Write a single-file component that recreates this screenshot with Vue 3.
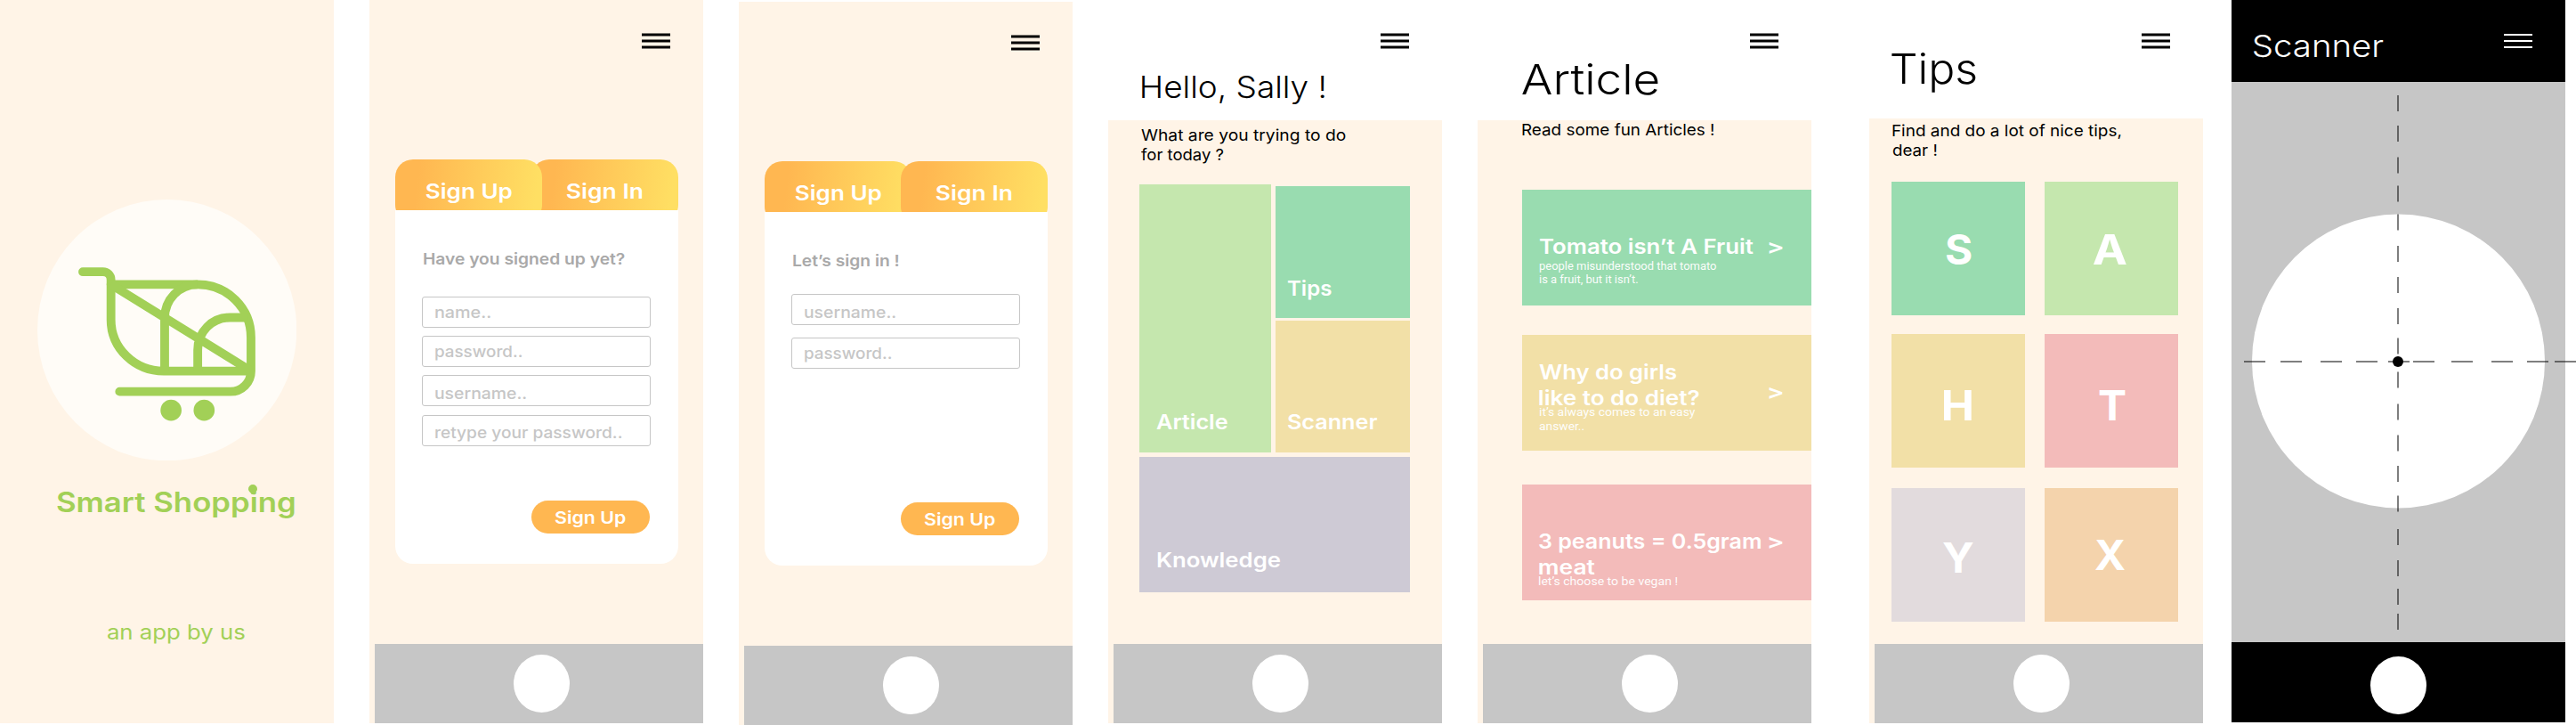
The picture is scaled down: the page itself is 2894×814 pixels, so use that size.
<script setup>
// Stretches a line of text so that its visible glyphs span the given width.
const ctx = document.createElement('canvas').getContext('2d')
const vFit = {
  mounted(el, { value }) {
    const s = getComputedStyle(el)
    ctx.font = `${s.fontWeight} ${s.fontSize} ${s.fontFamily}`
    const m = ctx.measureText(el.textContent.trim())
    const ink = m.actualBoundingBoxLeft + m.actualBoundingBoxRight
    const k = value / ink
    el.style.transform = `translateX(${m.actualBoundingBoxLeft * k}px) scaleX(${k})`
  },
}

const forms = [
  {
    id: 'up',
    heading: 'Have you signed up yet?',
    width: 225.7,
    fields: [
      { label: 'name..', width: 61.7, low: false },
      { label: 'password..', width: 97, low: false },
      { label: 'username..', width: 101.7, low: true },
      { label: 'retype your password..', width: 209, low: true },
    ],
  },
  {
    id: 'in',
    heading: 'Let’s sign in !',
    width: 119,
    fields: [
      { label: 'username..', width: 101.7, low: true },
      { label: 'password..', width: 97, low: false },
    ],
  },
]

const articles = [
  {
    id: 'tomato',
    title: [['Tomato isn’t A Fruit', 240.7]],
    note: [['people misunderstood that tomato', 199.7], ['is a fruit, but it isn’t.', 111]],
  },
  {
    id: 'diet',
    title: [['Why do girls', 154.3], ['like to do diet?', 180]],
    note: [['it’s always comes to an easy', 176], ['answer..', 50.5]],
  },
  {
    id: 'peanut',
    title: [['3 peanuts = 0.5gram', 249.7], ['meat', 62.7]],
    note: [['let’s choose to be vegan !', 155.5]],
  },
]

const letters = [
  { ch: 'S', width: 28.7, x: 61, y: 47 },
  { ch: 'A', width: 37.3, x: 54.7, y: 47 },
  { ch: 'H', width: 31, x: 59, y: 51 },
  { ch: 'T', width: 30, x: 61, y: 51 },
  { ch: 'Y', width: 33.7, x: 58.3, y: 49.2 },
  { ch: 'X', width: 33.7, x: 57.3, y: 46.1 },
]

const dashX = [14, 55, 100, 140, 176, 204, 247, 292, 332, 363]
const dashY = [107, 141, 176.5, 208.5, 240.5, 276, 311, 346, 379.5, 417.5, 453.5, 488.5, 523, 556.5, 594, 629, 661, 689]
</script>

<template>
  <main class="board">
    <section class="phone splash">
      <svg class="logo" viewBox="126 71 874 880" preserveAspectRatio="none">
        <ellipse cx="563" cy="511" rx="437" ry="440" fill="#fffcf7" />
        <g fill="none" stroke="#a2d057" stroke-width="29.5" stroke-linecap="round">
          <path d="M279 314.5H347A27 27 0 0 1 374 341.5V476C374 572 454 649 552 649H840" />
          <path d="M374 357H666C766 357 846 437 846 536V649A69 69 0 0 1 777 718H403" />
          <path stroke-linecap="butt" d="M374 357L846 649M555 649V471C555 408 604 357 666 357M666.5 649V578C666.5 517 714 468.5 775 468.5H836" />
        </g>
        <g fill="#a2d057">
          <circle cx="576.5" cy="781" r="35.5" />
          <circle cx="688" cy="781" r="35.5" />
        </g>
      </svg>
      <div class="brand">
        <span v-fit="267.3" class="line t32">Smart Shopping</span>
        <svg class="drop" viewBox="0 0 10 11"><path d="M5 0A5 5 0 0 1 10 5C10 7.8 7.4 8.6 6.3 11H3.7C2.6 8.6 0 7.8 0 5A5 5 0 0 1 5 0Z" fill="#a2d057" /></svg>
      </div>
      <span v-fit="153.6" class="line t24 tagline">an app by us</span>
    </section>

    <section v-for="form in forms" :key="form.id" class="phone sign" :class="form.id">
      <svg class="menu" viewBox="0 0 32 18"><path d="M0 2H32M0 9H32M0 16H32" /></svg>
      <div class="tabs">
        <div class="tab first"><span v-fit="96.4" class="line t24">Sign Up</span></div>
        <div class="tab second"><span v-fit="84.7" class="line t24">Sign In</span></div>
      </div>
      <div class="card">
        <span v-fit="form.width" class="line t18 heading">{{ form.heading }}</span>
        <div class="fields">
          <div v-for="f in form.fields" :key="f.label" class="field" :class="{ low: f.low }">
            <span v-fit="f.width" class="line t18">{{ f.label }}</span>
          </div>
        </div>
        <div class="submit"><span v-fit="80.3" class="line t20">Sign Up</span></div>
      </div>
      <div class="bar"><div class="home"></div></div>
    </section>

    <section class="phone plain hello">
      <header>
        <svg class="menu" viewBox="0 0 32 18"><path d="M0 2H32M0 9H32M0 16H32" /></svg>
        <span v-fit="205" class="line t36 title">Hello, Sally !</span>
      </header>
      <div class="body">
        <div class="intro">
          <span v-fit="229.7" class="line t18">What are you trying to do</span>
          <span v-fit="93" class="line t18">for today ?</span>
        </div>
        <div class="mosaic">
          <div class="upper">
            <div class="tile article"><span v-fit="80" class="line t24">Article</span></div>
            <div class="stack">
              <div class="tile tips"><span v-fit="49.7" class="line t24">Tips</span></div>
              <div class="tile scan"><span v-fit="100.3" class="line t24">Scanner</span></div>
            </div>
          </div>
          <div class="tile knowledge"><span v-fit="138.3" class="line t24">Knowledge</span></div>
        </div>
        <div class="bar"><div class="home"></div></div>
      </div>
    </section>

    <section class="phone plain reading">
      <header>
        <svg class="menu" viewBox="0 0 32 18"><path d="M0 2H32M0 9H32M0 16H32" /></svg>
        <span v-fit="153" class="line t48 title">Article</span>
      </header>
      <div class="body">
        <div class="intro"><span v-fit="215.4" class="line t18">Read some fun Articles !</span></div>
        <div class="list">
          <article v-for="a in articles" :key="a.id" class="story" :class="a.id">
            <div class="copy">
              <span v-for="t in a.title" :key="t[0]" v-fit="t[1]" class="line t24">{{ t[0] }}</span>
              <div class="note">
                <span v-for="n in a.note" :key="n[0]" v-fit="n[1]" class="line">{{ n[0] }}</span>
              </div>
            </div>
            <span v-fit="15.7" class="line t24 arrow">&gt;</span>
          </article>
        </div>
        <div class="bar"><div class="home"></div></div>
      </div>
    </section>

    <section class="phone plain spell">
      <header>
        <svg class="menu" viewBox="0 0 32 18"><path d="M0 2H32M0 9H32M0 16H32" /></svg>
        <span v-fit="95" class="line t48 title">Tips</span>
      </header>
      <div class="body">
        <div class="intro">
          <span v-fit="256.7" class="line t18">Find and do a lot of nice tips,</span>
          <span v-fit="49.7" class="line t18">dear !</span>
        </div>
        <div class="grid">
          <div
            v-for="l in letters"
            :key="l.ch"
            class="cell"
            :class="'c' + l.ch"
            :style="{ paddingLeft: l.x + 'px', paddingTop: l.y + 'px' }"
          >
            <span v-fit="l.width" class="line t48">{{ l.ch }}</span>
          </div>
        </div>
        <div class="bar"><div class="home"></div></div>
      </div>
    </section>

    <section class="phone scanner">
      <header>
        <span v-fit="145.6" class="line t36">Scanner</span>
        <svg class="menu" viewBox="0 0 32 18"><path d="M0 2H32M0 9H32M0 16H32" /></svg>
      </header>
      <svg class="view" viewBox="0 92 387 629">
        <rect y="92" width="375" height="629" fill="#c6c6c6" />
        <ellipse cx="187.5" cy="405.5" rx="164.5" ry="165" fill="#fff" />
        <g fill="#000" fill-opacity=".5">
          <rect v-for="x in dashX" :key="'x' + x" :x="x" y="405" width="24" height="2" />
          <rect v-for="y in dashY" :key="'y' + y" x="186" :y="y" width="2" height="18" />
        </g>
        <circle cx="187" cy="406" r="6" />
      </svg>
      <footer><div class="home"></div></footer>
    </section>
  </main>
</template>

<style>
body { margin: 0; background: #fff; }
</style>

<style scoped>
.board {
  display: flex;
  align-items: flex-start;
  gap: 40px;
  width: 2894px;
  height: 814px;
  overflow: hidden;
  background: #fff;
  font-family: Inter, "Open Sans", sans-serif;
  color: #000;
}
.phone {
  flex: none;
  display: flex;
  flex-direction: column;
  width: 375px;
  height: 812px;
  background: #fff4e7;
}
.phone.in { margin-top: 2px; }
.phone.plain { background: #fff; }
.phone.spell { margin-left: 25px; }
.phone.scanner { margin-left: -8px; height: 811px; background: none; }

.line {
  display: block;
  width: max-content;
  white-space: nowrap;
  transform-origin: 0 50%;
}
.t48 { font-size: 46.5px; line-height: 58px; }
.t36 { font-size: 34.6px; line-height: 44px; }
.t32 { font-size: 31px; line-height: 40px; font-weight: 600; }
.t24 { font-size: 23px; line-height: 29px; font-weight: 570; }
.t20 { font-size: 19.3px; line-height: 24px; font-weight: 570; }
.t18 { font-size: 17.6px; line-height: 22px; }
.t32, .t24, .t20, .t18 { padding-top: 1px; margin-bottom: -1px; }

/* splash */
.splash { color: #a2d057; }
.logo { flex: none; width: 291.3px; height: 293.3px; margin: 223.7px 0 0 42px; }
.brand { position: relative; margin: 26.4px 0 0 63.7px; height: 40px; }
.drop { position: absolute; left: 215.3px; top: .6px; width: 10px; height: 11px; }
.splash .tagline { margin: 111.4px 0 0 120.7px; font-weight: 400; }

/* shared parts */
.menu { flex: none; display: block; width: 32px; height: 18px; margin: 37px 0 0 306px; }
.menu path { fill: none; stroke: #000; stroke-width: 3; }
.bar { flex: none; height: 89px; margin: auto 0 0 6px; background: #c6c6c6; display: flex; }
.home { width: 63px; height: 65px; border-radius: 50%; background: #fff; margin: 12px 0 0 156px; }

/* sign up / sign in */
.tabs { flex: none; display: flex; height: 57px; margin: 124px 0 0 29px; overflow: hidden; color: #fff; }
.tab {
  flex: none;
  position: relative;
  box-sizing: border-box;
  width: 165px;
  height: 71px;
  padding-top: 20.5px;
  border-radius: 20px;
  background: linear-gradient(97deg, #ffb751 16%, #ffdf63 94%);
}
.tab.first { padding-left: 35.3px; }
.tab.second { padding-left: 40px; margin-left: -12px; }
.up .tab.first { z-index: 1; }
.card {
  flex: none;
  box-sizing: border-box;
  display: flex;
  flex-direction: column;
  width: 318px;
  height: 397px;
  margin-left: 29px;
  padding: 43px 0 34px 30px;
  border-radius: 0 0 20px 20px;
  background: #fff;
}
.heading { margin-left: 2px; color: #a9a9a9; font-weight: 570; }
.fields { display: flex; flex-direction: column; gap: 9px; margin-top: 32px; }
.in .fields { gap: 14px; margin-top: 27px; }
.field {
  box-sizing: border-box;
  width: 257px;
  height: 35px;
  border: 1px solid #c6c6c6;
  border-radius: 3px;
  padding: 4.7px 0 0 13.6px;
  color: #c6c6c6;
  font-weight: 550;
}
.field.low { padding-top: 8.4px; }
.up .field:last-child { margin-top: 1px; padding-top: 7.4px; }
.submit {
  box-sizing: border-box;
  width: 133px;
  height: 37px;
  margin: auto 0 0 123px;
  padding: 6.4px 0 0 26.4px;
  border-radius: 18.5px;
  background: #ffb751;
  color: #fff;
}

/* screens with a white header */
.plain header { flex: none; height: 135px; display: flow-root; }
.plain .body { flex: 1; display: flex; flex-direction: column; background: #fff4e7; }
.plain .title { font-weight: 300; }
.plain .intro { font-weight: 370; }

.hello .title { margin: 20px 0 0 38.3px; }
.hello .intro { padding: 5px 0 0 37.3px; }
.mosaic { width: 304px; margin: 23px 0 0 35px; color: #fff; }
.upper { display: flex; gap: 5px; }
.stack { display: flex; flex-direction: column; gap: 3px; margin-top: 2px; }
.tile { box-sizing: border-box; }
.article { width: 148px; height: 301px; padding: 252px 0 0 19.3px; background: #c5e7ae; }
.tips { width: 151px; height: 148px; padding: 99.8px 0 0 13px; background: #99dcb0; }
.scan { width: 151px; height: 148px; padding: 99px 0 0 13.7px; background: #f2e0a7; }
.knowledge { height: 152px; margin-top: 5px; padding: 101px 0 0 20.2px; background: #cecad5; }

.reading .title { margin: 5px 0 0 50.3px; }
.reading .intro { padding-left: 50.3px; margin-top: -.6px; }
.list { margin: 56.6px 0 0 50px; color: #fff; }
.story { box-sizing: border-box; height: 130px; display: flex; }
.copy { box-sizing: border-box; flex: none; width: 277px; padding-left: 19.3px; }
.arrow { margin-top: 49.4px; }
.note { font: 400 13.6px/16px Roboto, sans-serif; opacity: .96; margin-top: -8.6px; }
.tomato { background: #99dcb0; }
.tomato .copy { padding-top: 49.1px; }
.tomato .note { line-height: 15px; margin-top: -1.6px; }
.diet { background: #f2e0a7; margin-top: 33px; }
.diet .copy { padding-top: 27.1px; }
.peanut { background: #f3bbba; margin-top: 38px; }
.peanut .copy { padding-top: 49.1px; }

.spell header { height: 133px; }
.spell .title { margin: -7.4px 0 0 25px; }
.spell .intro { padding: 2px 0 0 25.6px; }
.spell .intro .line { line-height: 21.5px; }
.grid {
  display: grid;
  grid-template-columns: 150px 150px;
  grid-template-rows: 171px 173px 150px;
  column-gap: 22px;
  margin: 26px 0 0 25px;
  color: #fff;
}
.cell { box-sizing: border-box; height: 150px; }
.cell .line { font-weight: 700; }
.cS { background: #99dcb0; }
.cA { background: #c5e7ae; }
.cH { background: #f2e0a7; }
.cT { background: #f3bbba; }
.cY { background: #e2dbdd; }
.cX { background: #f4d3ac; }

/* scanner */
.scanner header { flex: none; position: relative; height: 92px; background: #000; color: #fff; display: flow-root; }
.scanner header .line { margin: 29.4px 0 0 24.7px; font-weight: 300; }
.scanner .menu { position: absolute; left: 306px; top: 37px; margin: 0; }
.scanner .menu path { stroke: #fff; stroke-width: 2; }
.view { flex: none; display: block; width: 387px; height: 629px; }
.scanner footer { flex: 1; display: flex; background: #000; }
.scanner .home { margin-top: 16px; }
</style>
